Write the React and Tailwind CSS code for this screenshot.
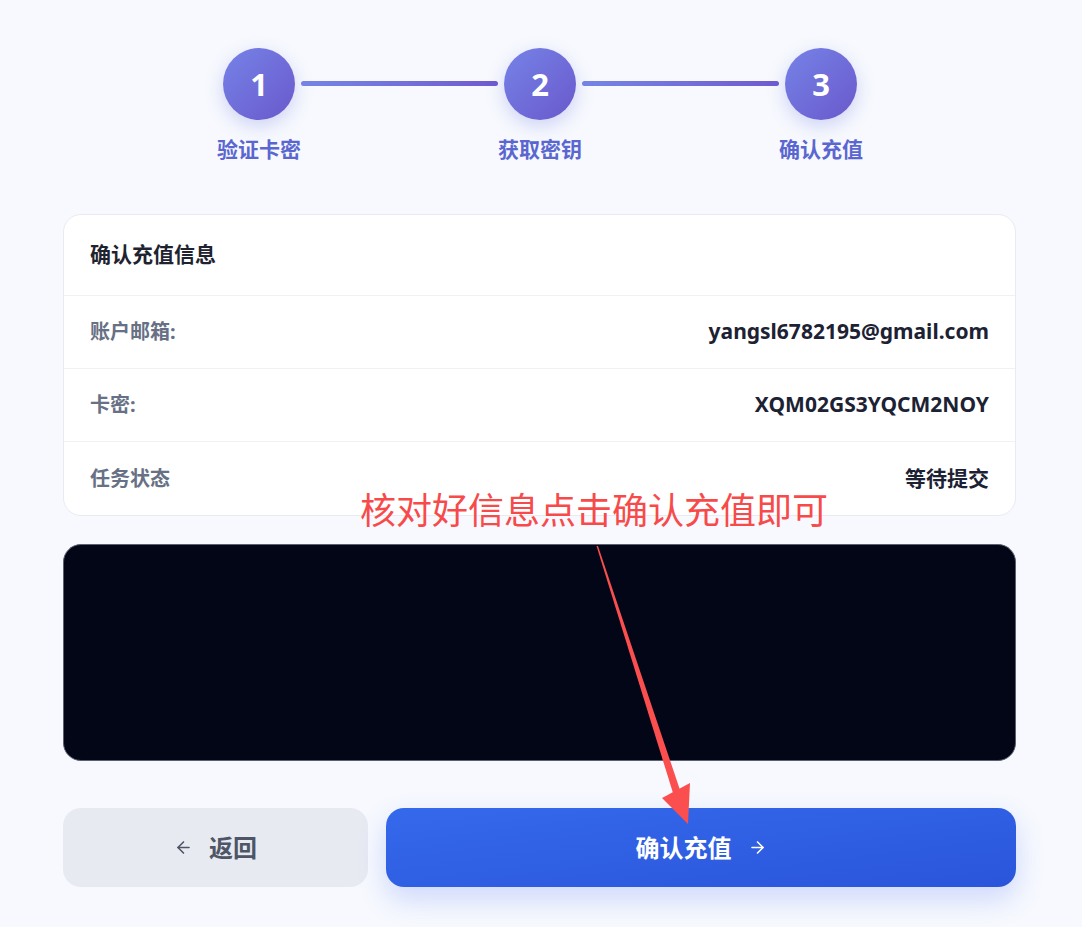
import React from 'react';
import { ArrowLeft, ArrowRight } from 'lucide-react';

const steps = [
    { n: 1, label: '验证卡密' },
    { n: 2, label: '获取密钥' },
    { n: 3, label: '确认充值' },
];

const rows = [
    { label: '账户邮箱:', value: 'yangsl6782195@gmail.com' },
    { label: '卡密:', value: 'XQM02GS3YQCM2NOY' },
    { label: '任务状态', value: '等待提交' },
];

const font = { fontFamily: '"Noto Sans", "Noto Sans CJK SC", sans-serif' };

const Stepper = () => (
    <div className="flex items-start justify-center pt-[48px] pr-[2px]">
        {steps.map((s, i) => (
            <React.Fragment key={s.n}>
                <div className="relative w-[72px] flex flex-col items-center">
                    <div className="w-[72px] h-[72px] rounded-full bg-gradient-to-br from-[#7583e8] to-[#6a58cb] shadow-[0_6px_18px_rgba(102,110,220,0.28)] flex items-center justify-center text-white text-[31px] font-bold">
                        {s.n}
                    </div>
                    <div className="mt-[16px] whitespace-nowrap text-[21px] leading-[26px] font-bold text-[#5a67d0]">{s.label}</div>
                </div>
                {i < steps.length - 1 && (
                    <div className="mx-[6px] mt-[33px] w-[197px] h-[5px] rounded-full bg-gradient-to-r from-[#7585e6] to-[#6f5ad0]" />
                )}
            </React.Fragment>
        ))}
    </div>
);

const InfoCard = () => (
    <div className="mt-[52px] bg-white rounded-[18px] border border-[#e8ebf2]">
        <div className="h-[81px] px-[26px] flex items-center border-b border-[#eff1f5] text-[21px] font-bold text-[#1f2330]">
            确认充值信息
        </div>
        {rows.map((r, i) => (
            <div
                key={r.label}
                className={`h-[73px] px-[26px] flex items-center justify-between ${i < rows.length - 1 ? 'border-b border-[#eff1f5]' : ''}`}
            >
                <span className="text-[20px] font-bold text-[#677084]">{r.label}</span>
                <span className="text-[21px] font-bold text-[#1c2233]">{r.value}</span>
            </div>
        ))}
    </div>
);

export default function App() {
    return (
        <div className="relative min-h-[927px] bg-[#f7f9fe]" style={font}>
            <Stepper />

            <div className="w-[953px] ml-[63px]">
                <InfoCard />

                <div className="mt-[28px] h-[217px] rounded-[18px] bg-[#030617] border border-[#5b6170]" />

                <div className="mt-[47px] flex gap-[18px]">
                    <button className="w-[305px] h-[79px] rounded-[18px] bg-[#e8eaf2] flex items-center justify-center gap-[16px] text-[#4d5566] text-[24px] font-bold">
                        <ArrowLeft size={19} strokeWidth={2} />
                        返回
                    </button>
                    <button className="flex-1 h-[79px] rounded-[18px] bg-gradient-to-br from-[#3569ec] to-[#2a55da] shadow-[0_12px_28px_rgba(60,100,240,0.22)] flex items-center justify-center gap-[16px] text-white text-[24px] font-bold">
                        确认充值
                        <ArrowRight size={19} strokeWidth={2} />
                    </button>
                </div>
            </div>

            {/* red annotation over the form */}
            <div className="absolute left-[360px] top-[486px] text-[36px] leading-[44px] text-[#f74b4b] whitespace-nowrap" style={{ fontFamily: '"Noto Sans CJK SC", sans-serif' }}>
                核对好信息点击确认充值即可
            </div>
            <svg className="absolute left-0 top-0 pointer-events-none" width="1082" height="927">
                <polygon points="596.5,546 598,546 680,790 673,793" fill="#fb4f4f" />
                <polygon points="662,798 690,783 688,824" fill="#fb4f4f" />
            </svg>
        </div>
    );
}
